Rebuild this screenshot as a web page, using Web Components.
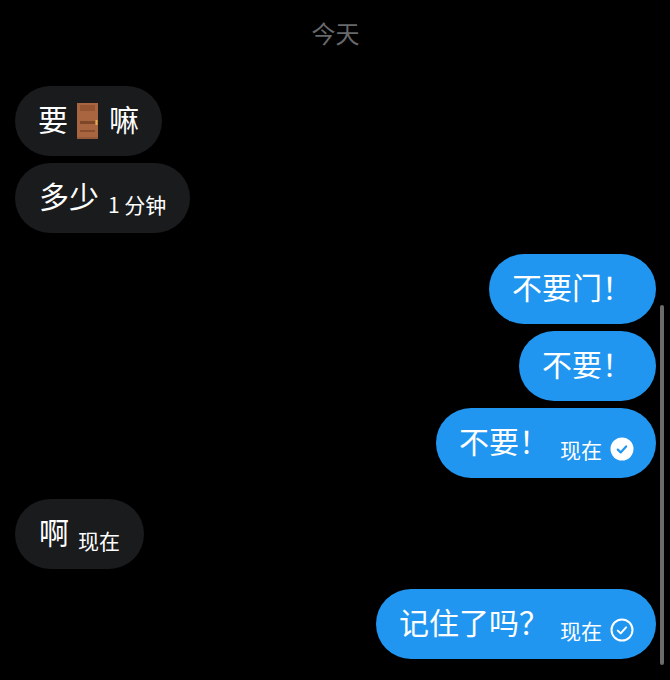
<!DOCTYPE html>
<html lang="zh">
<head>
<meta charset="utf-8">
<title>聊天</title>
<style>
  html, body { margin: 0; background: #000; }
  body {
    font-family: "Noto Sans CJK SC", "Noto Sans", sans-serif;
    font-weight: 400;
    overflow: hidden;
  }
</style>
</head>
<body>
<chat-thread>
  <chat-day>今天</chat-day>

  <chat-group side="in">
    <chat-bubble side="in" class="tight"><span>要</span><door-emoji></door-emoji><span>嘛</span></chat-bubble>
    <chat-bubble side="in">多少<chat-stamp slot="meta">1 分钟</chat-stamp></chat-bubble>
  </chat-group>

  <chat-group side="out">
    <chat-bubble side="out">不要门！</chat-bubble>
    <chat-bubble side="out">不要！</chat-bubble>
    <chat-bubble side="out">不要！<chat-stamp slot="meta">现在<read-tick state="read"></read-tick></chat-stamp></chat-bubble>
  </chat-group>

  <chat-group side="in">
    <chat-bubble side="in">啊<chat-stamp slot="meta">现在</chat-stamp></chat-bubble>
  </chat-group>

  <chat-group side="out">
    <chat-bubble side="out">记住了吗？<chat-stamp slot="meta">现在<read-tick state="sent"></read-tick></chat-stamp></chat-bubble>
  </chat-group>
</chat-thread>

<script>
class ChatThread extends HTMLElement {
  constructor() {
    super();
    this.attachShadow({ mode: "open" });
    this.shadowRoot.innerHTML = `
    <style>
      :host {
        display: block;
        position: relative;
        width: 670px;
        height: 680px;
        background: #000;
        overflow: hidden;
      }
      .list {
        display: flex;
        flex-direction: column;
        gap: 21px;
        padding: 0 14px 0 15px;
      }
      .scrollbar {
        position: absolute;
        right: 6px;
        top: 305px;
        width: 4px;
        height: 360px;
        border-radius: 2px;
        background: #6b6b6b;
      }
    </style>
    <div class="list"><slot></slot></div>
    <div class="scrollbar"></div>
    `;
  }
}

class ChatDay extends HTMLElement {
  constructor() {
    super();
    this.attachShadow({ mode: "open" });
    this.shadowRoot.innerHTML = `
    <style>
      :host {
        display: block;
        height: 65px;
        padding-top: 15px;
        box-sizing: border-box;
        text-align: center;
        font-size: 24px;
        line-height: 36px;
        color: #68696c;
      }
    </style>
    <slot></slot>
    `;
  }
}

class ChatGroup extends HTMLElement {
  constructor() {
    super();
    this.attachShadow({ mode: "open" });
    this.shadowRoot.innerHTML = `
    <style>
      :host {
        display: flex;
        flex-direction: column;
        align-items: flex-start;
        gap: 7px;
      }
      :host([side="out"]) {
        align-items: flex-end;
      }
      :host(:last-child) {
        margin-top: -1px;
      }
    </style>
    <slot></slot>
    `;
  }
}

class ChatBubble extends HTMLElement {
  constructor() {
    super();
    this.attachShadow({ mode: "open" });
    this.shadowRoot.innerHTML = `
    <style>
      :host {
        display: flex;
        align-items: center;
        box-sizing: border-box;
        height: 70px;
        padding: 0 24px 6px;
        border-radius: 35px;
        font-size: 30px;
        line-height: 40px;
        white-space: nowrap;
        color: #fff;
        background: #1a1b1d;
      }
      :host(.tight) {
        padding-left: 23px;
        padding-right: 23px;
      }
      :host([side="out"]) {
        padding-left: 23px;
        background: #2196f0;
      }
    </style>
    <slot></slot>
    <slot name="meta"></slot>
    `;
  }
}

class ChatStamp extends HTMLElement {
  constructor() {
    super();
    this.attachShadow({ mode: "open" });
    this.shadowRoot.innerHTML = `
    <style>
      :host {
        display: inline-flex;
        align-items: center;
        gap: 8px;
        margin: 18px 0 0 9px;
        font-size: 21px;
        line-height: 28px;
      }
      :host-context(chat-bubble[side="out"]) {
        margin-left: 11px;
        margin-right: -2px;
      }
    </style>
    <slot></slot>
    `;
  }
}

class ReadTick extends HTMLElement {
  constructor() {
    super();
    this.attachShadow({ mode: "open" });
    const read = this.getAttribute("state") === "read";
    this.shadowRoot.innerHTML = `
    <style>
      :host {
        display: inline-block;
        width: 24px;
        height: 24px;
      }
      svg { display: block; }
    </style>
    <svg width="24" height="24" viewBox="0 0 24 24" fill="none">
      ${read
        ? `<circle cx="12" cy="12" r="11.5" fill="#fff"/>
           <path d="M7.8 12.6l2.9 2.8 5.4-6" stroke="#2196f0" stroke-width="2.2" stroke-linecap="round" stroke-linejoin="round"/>`
        : `<circle cx="12" cy="12" r="10.5" stroke="#fff" stroke-width="2"/>
           <path d="M7.8 12.6l2.9 2.8 5.4-6" stroke="#fff" stroke-width="2" stroke-linecap="round" stroke-linejoin="round"/>`}
    </svg>
    `;
  }
}

// wooden door, drawn in place of the emoji glyph
class DoorEmoji extends HTMLElement {
  constructor() {
    super();
    this.attachShadow({ mode: "open" });
    this.shadowRoot.innerHTML = `
    <style>
      :host {
        display: inline-block;
        width: 21px;
        height: 36px;
        margin: 6px 11px 0 9px;
      }
      svg { display: block; }
    </style>
    <svg width="21" height="36" viewBox="0 0 21 36">
      <rect width="21" height="36" fill="#a9653f"/>
      <rect x="3" y="2" width="15" height="6" fill="#945533"/>
      <rect x="3" y="18" width="15" height="3" fill="#7f4729"/>
      <rect x="3" y="27" width="15" height="2" fill="#8a4e2e"/>
      <rect y="34" width="21" height="2" fill="#96593a"/>
      <rect x="18.5" y="17" width="2" height="5" fill="#e4ac48"/>
    </svg>
    `;
  }
}

customElements.define("chat-thread", ChatThread);
customElements.define("chat-day", ChatDay);
customElements.define("chat-group", ChatGroup);
customElements.define("chat-bubble", ChatBubble);
customElements.define("chat-stamp", ChatStamp);
customElements.define("read-tick", ReadTick);
customElements.define("door-emoji", DoorEmoji);
</script>
</body>
</html>
